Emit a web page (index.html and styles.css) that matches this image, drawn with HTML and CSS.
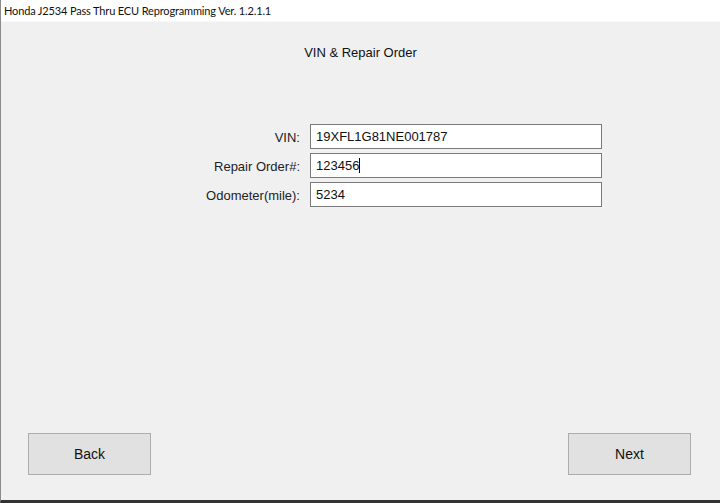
FILE: index.html
```html
<!DOCTYPE html>
<html lang="en">
<head>
    <meta charset="UTF-8">
    <meta name="viewport" content="width=device-width, initial-scale=1.0">
    <title>Honda J2534 Pass Thru ECU Reprogramming</title>
    <link rel="stylesheet" href="styles.css">
</head>
<body>

    <div class="window">
        <div class="title-bar">Honda J2534 Pass Thru ECU Reprogramming Ver. 1.2.1.1</div>

        <div class="content">
            <h2>VIN &amp; Repair Order</h2>

            <div class="form">
                <label for="vin">VIN:</label>
                <input type="text" id="vin" value="19XFL1G81NE001787">

                <label for="repairOrder">Repair Order#:</label>
                <div class="field">
                    <input type="text" id="repairOrder" value="123456">
                    <span class="caret"></span>
                </div>

                <label for="odometer">Odometer(mile):</label>
                <input type="text" id="odometer" value="5234">
            </div>

            <div class="buttons">
                <button>Back</button>
                <button>Next</button>
            </div>
        </div>
    </div>

</body>
</html>
```

FILE: styles.css
```css
* {
    margin: 0;
    padding: 0;
    box-sizing: border-box;
    font-family: "Liberation Sans", Arial, sans-serif;
}
body {
    background-color: #f0f0f0;
    width: 720px;
    height: 503px;
    overflow: hidden;
}
.window {
    height: 503px;
    display: flex;
    flex-direction: column;
    border-left: 1px solid #8a8a8a;
    border-bottom: 3px solid #333;
}
.title-bar {
    height: 22px;
    background: white;
    border-bottom: 1px solid #f8f8f8;
    font-family: Lato, "Noto Sans", sans-serif;
    font-size: 11px;
    letter-spacing: -0.15px;
    line-height: 22px;
    padding-left: 3px;
    color: #111;
}
.content {
    flex: 1;
    display: flex;
    flex-direction: column;
    background: #f0f0f0;
}
h2 {
    font-weight: normal;
    font-size: 13px;
    line-height: 16px;
    color: #111;
    text-align: center;
    margin: 23px 0 63px;
}
.form {
    display: grid;
    grid-template-columns: 299px 292px;
    column-gap: 10px;
    row-gap: 4px;
    align-items: center;
}
label {
    text-align: right;
    font-size: 13px;
    color: #222;
    padding-top: 2px;
}
.field {
    position: relative;
}
input {
    width: 292px;
    height: 25px;
    border: 1px solid #7a7a7a;
    background: white;
    font-size: 13px;
    padding: 0 5px;
    color: #111;
    outline: none;
}
.caret {
    position: absolute;
    left: 49px;
    top: 5px;
    width: 1px;
    height: 15px;
    background: #000;
}
.buttons {
    margin-top: auto;
    display: flex;
    justify-content: space-between;
    padding: 0 29px 25px 27px;
}
button {
    width: 123px;
    height: 42px;
    background: #e1e1e1;
    border: 1px solid #adadad;
    font-size: 14px;
    color: #111;
    cursor: pointer;
}
button:hover {
    background: #e5f1fb;
    border-color: #0078d7;
}
```
